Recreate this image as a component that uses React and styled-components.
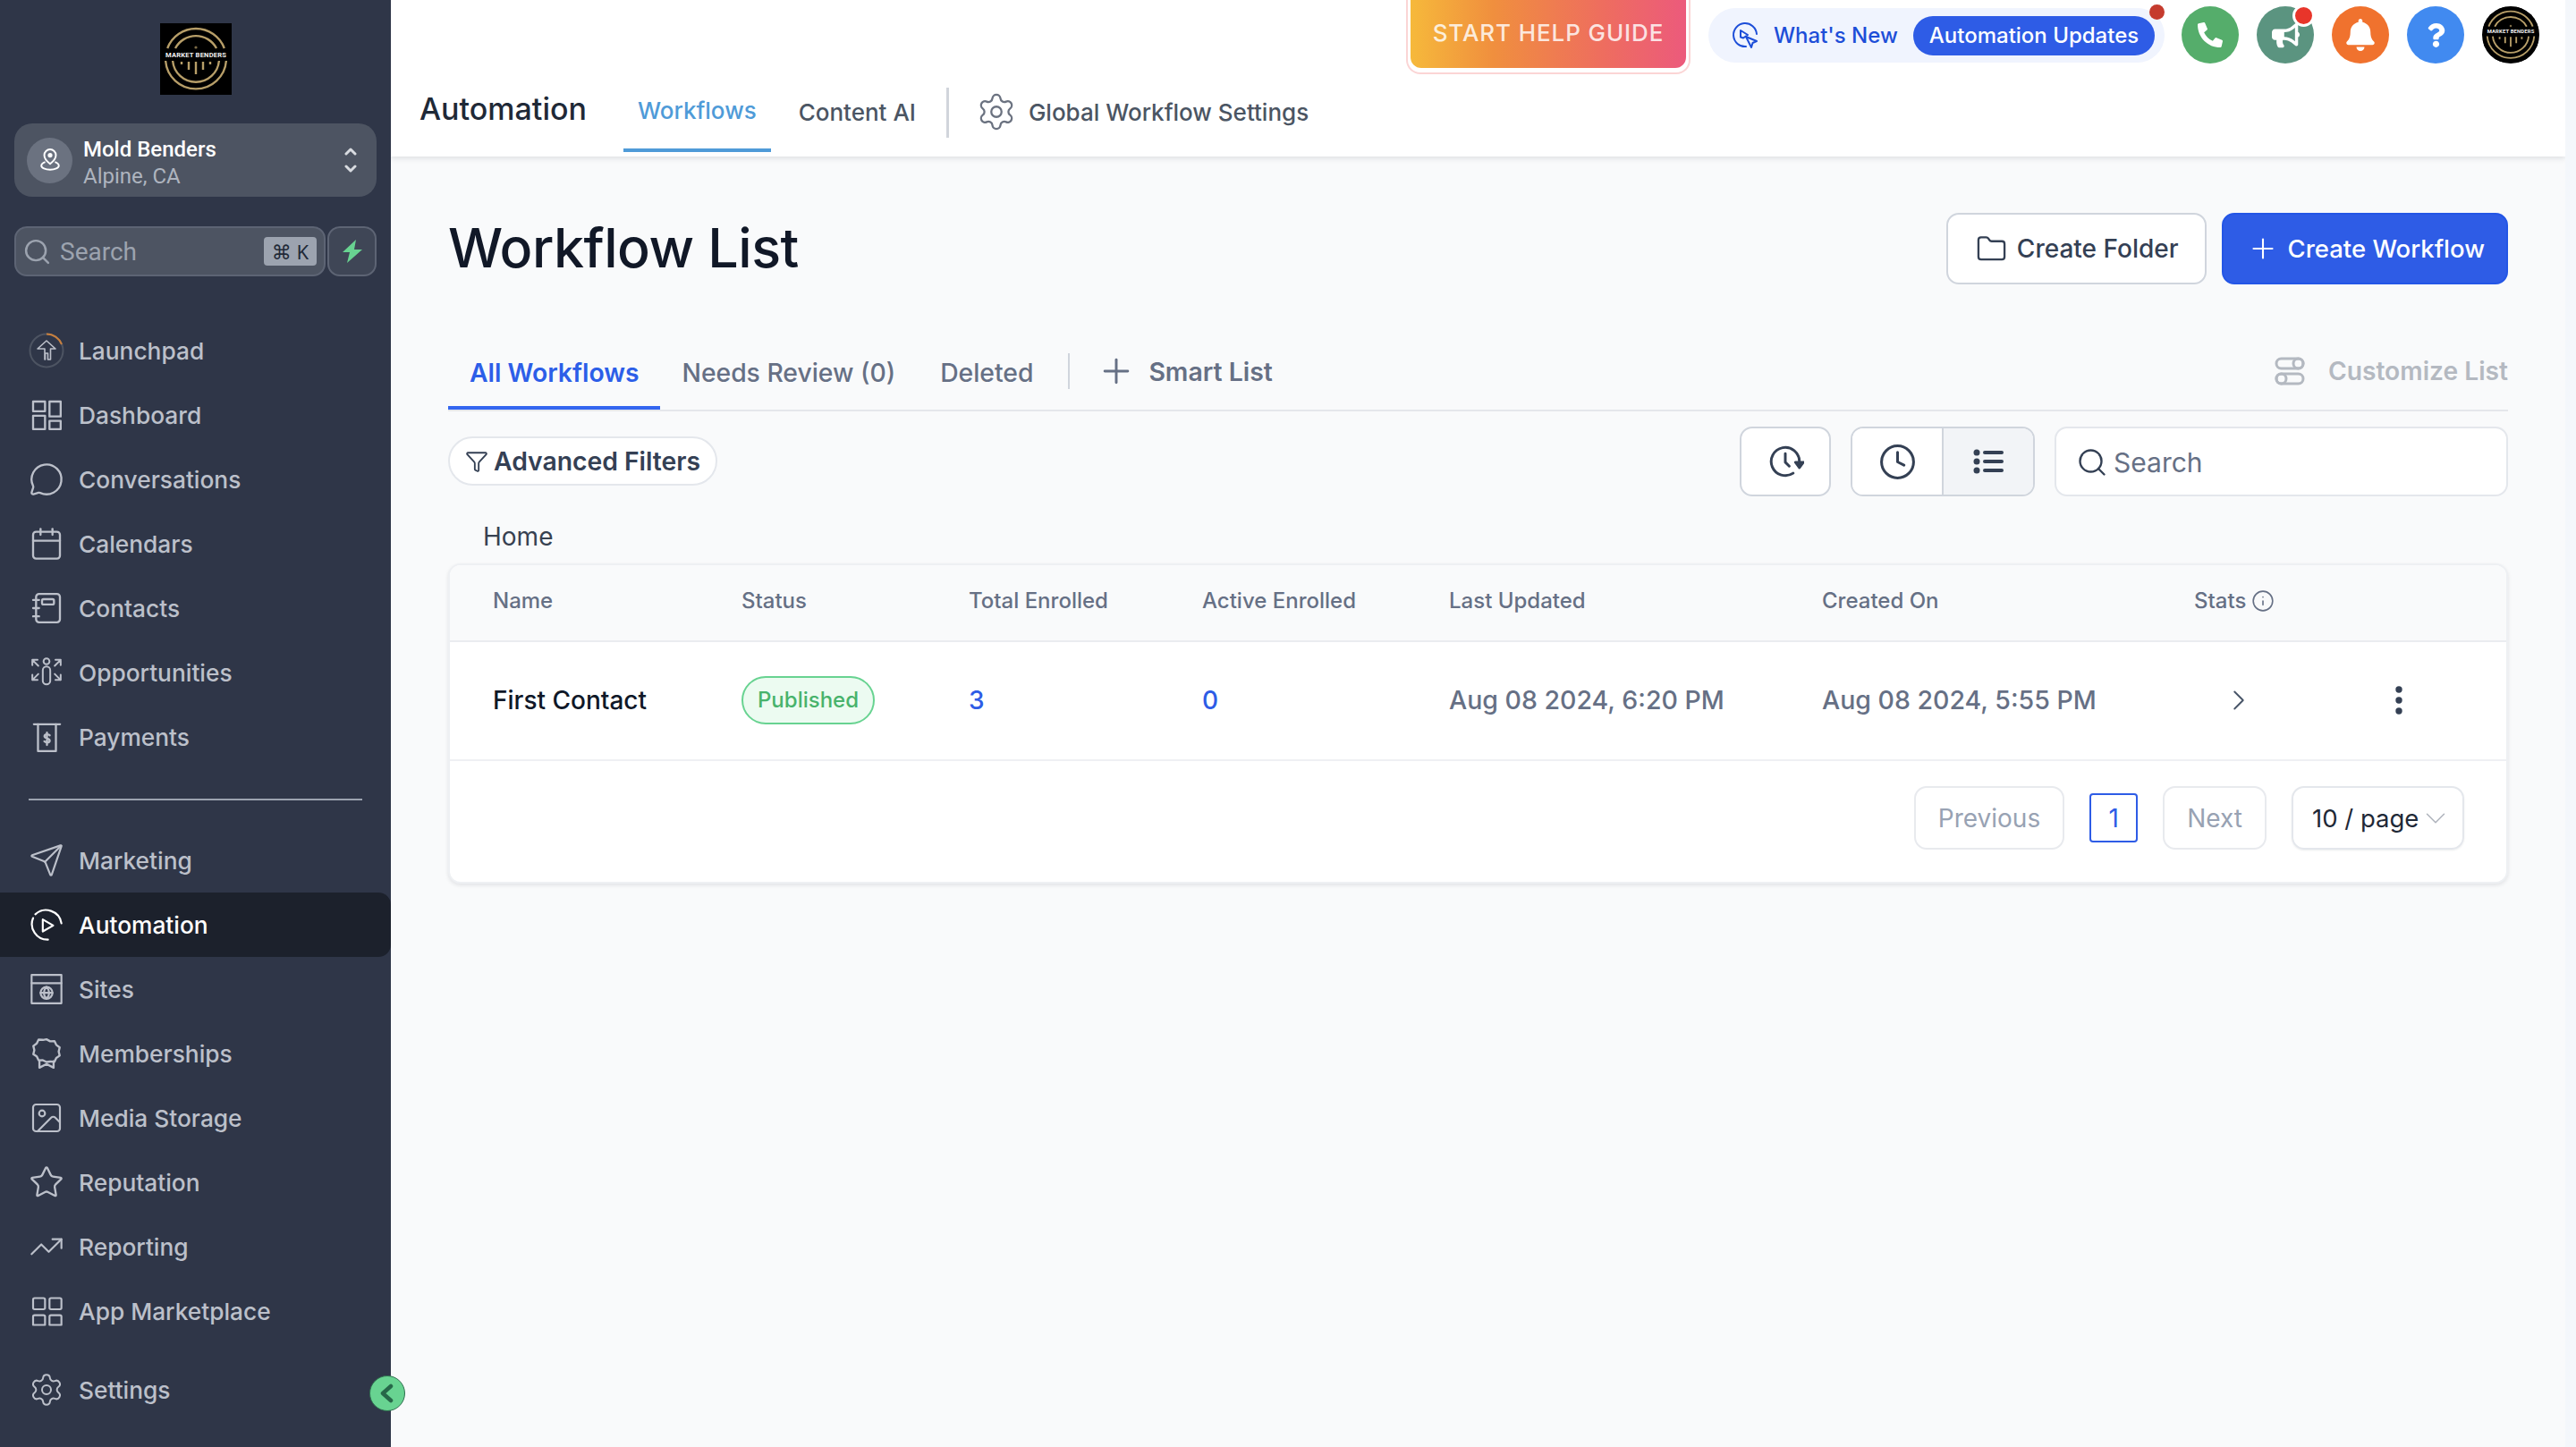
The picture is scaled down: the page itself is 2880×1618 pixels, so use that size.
import styled, { createGlobalStyle } from "styled-components";
import {
  Calendar,
  ChevronDown,
  ChevronRight,
  Clock,
  Filter,
  Folder,
  Image,
  Info,
  MessageCircle,
  Plus,
  Search,
  Send,
  Settings,
  Star,
  TrendingUp,
} from "lucide-react";
import { FaBell, FaBullhorn, FaPhoneAlt, FaQuestion } from "react-icons/fa";

const GlobalStyle = createGlobalStyle`
  * { box-sizing: border-box; }
  html, body { margin: 0; padding: 0; background: #f9fafb; }
  body { font-family: Inter, "Liberation Sans", sans-serif; }
`;

const Page = styled.div`
  display: flex;
  width: 2880px;
  height: 1618px;
  overflow: hidden;
  position: relative;
`;

/* ---------- sidebar ---------- */
const Sidebar = styled.aside`
  width: 437px;
  flex: none;
  background: #2f3648;
  display: flex;
  flex-direction: column;
  position: relative;
`;
const LogoWrap = styled.div`
  display: flex;
  justify-content: center;
  padding-top: 26px;
  height: 138px;
`;
const LocationCard = styled.div`
  margin: 0 16px;
  height: 82px;
  border-radius: 20px;
  background: #4d5462;
  display: flex;
  align-items: center;
  padding: 0 22px 0 14px;
  font-family: Roboto, sans-serif;
`;
const PinCircle = styled.div`
  width: 51px;
  height: 51px;
  border-radius: 50%;
  background: #6b7280;
  display: flex;
  align-items: center;
  justify-content: center;
  flex: none;
`;
const LocationText = styled.div`
  flex: 1;
  margin-left: 12px;
  padding-top: 5px;
  line-height: 30px;
`;
const LocationName = styled.div`
  font-size: 24px;
  font-weight: 500;
  color: #fff;
`;
const LocationCity = styled.div`
  font-size: 24px;
  color: #aeb4bf;
`;
const SearchRow = styled.div`
  display: flex;
  gap: 2px;
  margin: 33px 16px 0;
  height: 56px;
`;
const SideSearch = styled.div`
  flex: 1;
  border: 2px solid #5d6474;
  border-radius: 14px;
  background: #4d5462;
  display: flex;
  align-items: center;
  padding: 0 8px 0 7px;
  color: #9ca3af;
  font-family: Roboto, sans-serif;
  font-size: 28px;
`;
const SideSearchLabel = styled.span`
  flex: 1;
  margin-left: 9px;
`;
const Kbd = styled.span`
  width: 59px;
  height: 32px;
  background: #9ca3af;
  border-radius: 4px;
  color: #1f2937;
  font-size: 22px;
  display: flex;
  align-items: center;
  justify-content: center;
  font-family: "Noto Sans", "DejaVu Sans", sans-serif;
`;
const BoltButton = styled.div`
  width: 55px;
  border: 2px solid #5d6474;
  border-radius: 14px;
  background: #3f4656;
  display: flex;
  align-items: center;
  justify-content: center;
`;
const NavList = styled.nav`
  display: flex;
  flex-direction: column;
  margin-top: ${(p) => p.$top || 0}px;
`;
const NavItem = styled.div`
  height: 72px;
  display: flex;
  align-items: center;
  padding-left: 32px;
  color: ${(p) => (p.$active ? "#ffffff" : "#bcc0ca")};
  background: ${(p) => (p.$active ? "#1c212c" : "transparent")};
  border-radius: ${(p) => (p.$active ? "0 14px 14px 0" : "0")};
  font-size: 26.3px;
  font-weight: 500;
`;
const NavIconBox = styled.span`
  width: 40px;
  height: 40px;
  display: flex;
  align-items: center;
  justify-content: center;
  margin-right: 16px;
  flex: none;
`;
const NavDivider = styled.div`
  margin: 33px 32px 31px;
  height: 2px;
  background: #9ca3af;
`;
const SettingsNav = styled(NavItem)`
  margin-top: 16px;
`;
const CollapseButton = styled.div`
  position: absolute;
  left: 413px;
  top: 1538px;
  width: 40px;
  height: 40px;
  border-radius: 50%;
  background: #68d391;
  border: 1px solid #2f6f4f;
  display: flex;
  align-items: center;
  justify-content: center;
  z-index: 3;
`;

/* ---------- main ---------- */
const Main = styled.main`
  flex: 1;
  min-width: 0;
  display: flex;
  flex-direction: column;
`;
const Topbar = styled.header`
  height: 175px;
  background: #fff;
  box-shadow: 0 2px 6px rgba(16, 24, 40, 0.12);
  display: flex;
  flex-direction: column;
`;
const TopActions = styled.div`
  height: 83px;
  display: flex;
  justify-content: flex-end;
  align-items: flex-start;
  padding-right: 29px;
`;
const HelpOuter = styled.div`
  width: 318px;
  height: 83px;
  padding: 0 3px 3px;
  margin-right: 20px;
  border: 2px solid #fbd5d5;
  border-top: none;
  border-radius: 0 0 16px 16px;
`;
const HelpGuide = styled.div`
  height: 76px;
  border-radius: 0 0 12px 12px;
  background: linear-gradient(90deg, #f6b93b, #f08f3e 30%, #ee6d5f 70%, #ec5a7c);
  color: rgba(255, 255, 255, 0.82);
  font-size: 26px;
  font-weight: 500;
  letter-spacing: 0.9px;
  display: flex;
  align-items: center;
  justify-content: center;
  padding-bottom: 4px;
`;
const NewsPill = styled.div`
  width: 510px;
  height: 61px;
  margin: 9px 19px 0 0;
  border-radius: 31px;
  background: #f0f4fe;
  display: flex;
  align-items: center;
  padding: 0 11px 0 25px;
  position: relative;
  font-size: 24px;
  font-weight: 500;
  color: #1d4ed8;
`;
const NewsLabel = styled.span`
  flex: 1;
  margin-left: 16px;
`;
const NewsBadge = styled.span`
  width: 270px;
  height: 44px;
  border-radius: 22px;
  background: #2e5ce6;
  color: #fff;
  display: flex;
  align-items: center;
  justify-content: center;
`;
const Dot = styled.span`
  position: absolute;
  border-radius: 50%;
  background: ${(p) => p.$color};
`;
const NewsDot = styled(Dot)`
  right: 0;
  top: -4px;
  width: 17px;
  height: 17px;
`;
const RoundButtons = styled.div`
  display: flex;
  gap: 20px;
  margin-top: 7px;
`;
const RoundButton = styled.div`
  width: 64px;
  height: 64px;
  border-radius: 50%;
  background: ${(p) => p.$color};
  color: #fff;
  display: flex;
  align-items: center;
  justify-content: center;
  position: relative;
  overflow: ${(p) => (p.$clip ? "hidden" : "visible")};
`;
const AlertDot = styled(Dot)`
  right: -1px;
  top: -2px;
  width: 25px;
  height: 25px;
  border: 3px solid #fff;
`;
const SubNav = styled.div`
  flex: 1;
  display: flex;
  padding-left: 32px;
`;
const SubTitle = styled.div`
  font-size: 34px;
  font-weight: 500;
  color: #1f2937;
  line-height: 44px;
  padding-top: 17px;
  margin-right: 41px;
`;
const SubTab = styled.div`
  height: 87px;
  padding: ${(p) => (p.$active ? "24px" : "26px")} 16px 0;
  font-size: 26px;
  font-weight: 500;
  line-height: 34px;
  color: ${(p) => (p.$active ? "#4f9bd8" : "#4b5563")};
  border-bottom: 4px solid ${(p) => (p.$active ? "#4f9bd8" : "transparent")};
  margin-right: ${(p) => (p.$active ? "15px" : "0")};
`;
const SubDivider = styled.div`
  width: 3px;
  height: 56px;
  margin: 15px 34px 0 18px;
  background: #d1d5db;
`;
const SubLink = styled.div`
  display: flex;
  align-items: center;
  height: 54px;
  margin-top: 15px;
  gap: 17px;
  font-size: 26px;
  font-weight: 500;
  color: #4b5563;
`;
const GearSlot = styled.span`
  display: flex;
  margin: 0 -4px;
`;

const Content = styled.div`
  padding: 63px 64px 0;
`;
const HeadingRow = styled.div`
  display: flex;
  align-items: center;
  justify-content: space-between;
  height: 80px;
`;
const Heading = styled.h1`
  margin: 0 0 3px;
  font-size: 61px;
  font-weight: 500;
  color: #111827;
  letter-spacing: -0.5px;
`;
const HeadingActions = styled.div`
  display: flex;
  gap: 17px;
`;
const ActionButton = styled.button`
  height: 80px;
  padding: 0 ${(p) => (p.$primary ? "24px" : "29px")} 0 ${(p) => (p.$primary ? "26px" : "31px")};
  display: flex;
  align-items: center;
  gap: ${(p) => (p.$primary ? "10px" : "11px")};
  border-radius: 14px;
  border: 2px solid ${(p) => (p.$primary ? "#2456e6" : "#d0d5dd")};
  background: ${(p) => (p.$primary ? "#2e5ce6" : "#fff")};
  color: ${(p) => (p.$primary ? "#fff" : "#344054")};
  font-family: Inter, sans-serif;
  font-size: ${(p) => (p.$primary ? "27.5px" : "28px")};
  font-weight: 500;
`;
const TabsRow = styled.div`
  margin-top: 60px;
  height: 82px;
  border-bottom: 2px solid #e5e7eb;
  display: flex;
  align-items: flex-start;
`;
const ListTab = styled.div`
  height: 80px;
  padding: 2px 24px 0;
  display: flex;
  align-items: center;
  font-size: 28.3px;
  font-weight: ${(p) => (p.$active ? 600 : 500)};
  color: ${(p) => (p.$active ? "#2c5ee8" : "#667085")};
  border-bottom: 4px solid ${(p) => (p.$active ? "#3366f0" : "transparent")};
  margin-right: ${(p) => (p.$active ? "0" : "2px")};
`;
const TabDivider = styled.div`
  width: 2px;
  height: 40px;
  margin: 17px 30px 0 13px;
  background: #d0d5dd;
`;
const SmartList = styled.div`
  display: flex;
  align-items: center;
  gap: 14px;
  height: 74px;
  font-size: 28.4px;
  font-weight: 600;
  color: #667085;
`;
const CustomizeList = styled.div`
  margin-left: auto;
  display: flex;
  align-items: center;
  gap: 26px;
  height: 74px;
  font-size: 28.2px;
  font-weight: 600;
  color: #b4b9c1;
`;
const Toolbar = styled.div`
  margin-top: 17px;
  height: 78px;
  display: flex;
  align-items: flex-start;
`;
const FilterPill = styled.div`
  margin-top: 11px;
  height: 55px;
  padding: 0 17px 0 17px;
  display: flex;
  align-items: center;
  gap: 6px;
  border: 2px solid #e4e7ec;
  border-radius: 28px;
  background: #fff;
  font-size: 28.3px;
  font-weight: 600;
  color: #344054;
`;
const ToolbarRight = styled.div`
  margin-left: auto;
  display: flex;
  gap: 22px;
`;
const IconButton = styled.div`
  width: 102px;
  height: 78px;
  border: 2px solid #d0d5dd;
  border-radius: 14px;
  background: #fff;
  color: #344054;
  display: flex;
  align-items: center;
  justify-content: center;
`;
const Segmented = styled.div`
  display: flex;
  width: 206px;
  height: 78px;
  border: 2px solid #d0d5dd;
  border-radius: 14px;
  overflow: hidden;
  background: #fff;
`;
const Segment = styled.div`
  flex: 1;
  display: flex;
  align-items: center;
  justify-content: center;
  color: #344054;
  background: ${(p) => (p.$active ? "#f2f4f7" : "#fff")};
  border-left: ${(p) => (p.$active ? "2px solid #d0d5dd" : "none")};
`;
const SearchBox = styled.div`
  width: 507px;
  height: 78px;
  border: 2px solid #e4e7ec;
  border-radius: 14px;
  background: #fff;
  display: flex;
  align-items: center;
  gap: 6px;
  padding: 2px 0 0 22px;
  color: #667085;
  font-size: 30px;
`;
const Breadcrumb = styled.div`
  padding: 28px 0 13px 39px;
  line-height: 34px;
  font-size: 28px;
  color: #374151;
`;
const Card = styled.section`
  height: 358px;
  border: 2px solid #eef0f3;
  border-radius: 14px;
  background: #fff;
  box-shadow: 0 2px 4px rgba(16, 24, 40, 0.1);
  overflow: hidden;
`;
const columns = "278px 254px 261px 276px 417px 416px 225px 1fr";
const HeadRow = styled.div`
  display: grid;
  grid-template-columns: ${columns};
  align-items: center;
  height: 86px;
  padding: 0 0 5px 48px;
  background: #f9fafb;
  border-bottom: 2px solid #eaecf0;
  font-size: 24px;
  font-weight: 500;
  color: #667085;
`;
const HeadWithIcon = styled.span`
  display: flex;
  align-items: center;
  gap: 6px;
`;
const BodyRow = styled.div`
  display: grid;
  grid-template-columns: ${columns};
  align-items: center;
  height: 133px;
  padding: 0 0 2px 48px;
  border-bottom: 2px solid #eff0f3;
  font-size: 28px;
  font-weight: 500;
  color: #667085;
`;
const WorkflowName = styled.span`
  color: #101828;
`;
const DateCell = styled.span`
  font-size: 28.5px;
`;
const Published = styled.span`
  width: 149px;
  height: 54px;
  border-radius: 27px;
  border: 2px solid #68d391;
  background: #ecfbf1;
  color: #48b36c;
  font-size: 24px;
  display: flex;
  align-items: center;
  justify-content: center;
`;
const CountLink = styled.span`
  color: #2e5ce6;
`;
const StatsArrow = styled.span`
  display: flex;
  margin-left: 31px;
  color: #475467;
`;
const Kebab = styled.svg`
  display: block;
  fill: #344054;
`;
const Pagination = styled.div`
  display: flex;
  align-items: flex-start;
  justify-content: flex-end;
  padding: 28px 47px 0 0;
  gap: 28px;
`;
const PageButton = styled.div`
  height: 71px;
  padding: 0 25px;
  display: flex;
  align-items: center;
  border: 2px solid #e8eaee;
  border-radius: 14px;
  font-size: 28px;
  color: #98a2b3;
`;
const PageNumber = styled.div`
  width: 54px;
  height: 55px;
  margin-top: 8px;
  display: flex;
  align-items: center;
  justify-content: center;
  border: 2px solid #2e5ce6;
  border-radius: 4px;
  font-size: 28px;
  color: #2e5ce6;
`;
const PageSize = styled.div`
  width: 193px;
  height: 71px;
  padding-left: 21px;
  display: flex;
  align-items: center;
  border: 2px solid #e4e7ec;
  border-radius: 14px;
  font-size: 27.5px;
  color: #1f2937;
  box-shadow: 0 1px 2px rgba(16, 24, 40, 0.08);
`;
const RightStrip = styled.div`
  width: 12px;
  flex: none;
  background: #f4f7fb;
`;

/* ---------- drawn icons ---------- */
const Logo = ({ size }) => (
  <svg width={size} height={size} viewBox="0 0 80 80">
    <rect width="80" height="80" fill="#000" />
    <g fill="none" stroke="#b79e68" strokeWidth="2.4">
      <path d="M8.2 28A34 34 0 0 1 71.8 28" />
      <path d="M6.1 42A34 34 0 0 0 73.9 42" />
      <path d="M17 28A26 26 0 0 1 63 28" />
      <path d="M14.1 42A26 26 0 0 0 65.9 42" />
      <path d="M24 43v3M32 43v9M40 43v14M48 43v9M56 43v3" />
    </g>
    <circle cx="40" cy="27" r="1.6" fill="#7d6c47" />
    <text x="40" y="37.5" textAnchor="middle" fontFamily="Roboto, sans-serif" fontWeight="700" fontSize="7.6" fill="#f2f2f2" textLength="68">
      MARKET BENDERS
    </text>
  </svg>
);

const Stroke = ({ size = 40, width = 1.4, children }) => (
  <svg width={size} height={size} viewBox="0 0 24 24" fill="none" stroke="currentColor" strokeWidth={width} strokeLinecap="round" strokeLinejoin="round">
    {children}
  </svg>
);

const LaunchpadIcon = () => (
  <svg width="40" height="40" viewBox="0 0 40 40" fill="none">
    <circle cx="20" cy="20" r="18.5" stroke="#4d5462" strokeWidth="2" />
    <path d="M20 1.5A18.5 18.5 0 0 1 37 13" stroke="#c77f3e" strokeWidth="2" />
    <path d="M20 9l10 9h-5.5v12h-3v-7h-3v7h-.5V18H10z" stroke="#bcc0ca" strokeWidth="1.6" strokeLinejoin="round" />
  </svg>
);
const DashboardIcon = () => (
  <Stroke>
    <rect x="3" y="3" width="8" height="6.5" />
    <rect x="14" y="3" width="7.5" height="10" />
    <rect x="3" y="12.5" width="8" height="9" />
    <rect x="14" y="16" width="7.5" height="5.5" />
  </Stroke>
);
const ContactsIcon = () => (
  <Stroke>
    <rect x="5" y="2.5" width="16" height="19" rx="2" />
    <rect x="9" y="6" width="8" height="3.5" rx="1" />
    <path d="M3 6.5h4M3 12h4M3 17.5h4" />
  </Stroke>
);
const OpportunitiesIcon = () => (
  <Stroke size={46} width={1.2}>
    <circle cx="12" cy="4.5" r="2" />
    <path d="M9.5 10.5a2.5 2.5 0 0 1 5 0v7a2.5 2.5 0 0 1-5 0z" />
    <path d="M2.5 7V3.5H6M2.5 3.5l4 4M21.5 7V3.5H18M21.5 3.5l-4 4M2.5 13.5V17H6M2.5 17l4-4M21.5 13.5V17H18M21.5 17l-4-4" />
  </Stroke>
);
const PaymentsIcon = () => (
  <Stroke size={37} width={1.5}>
    <path d="M2.5 2.5h19" />
    <path d="M5.5 2.5V22h13V2.5" />
    <path d="M14 10.5c-.5-.8-3.8-1.2-3.8.7 0 2 3.8 1 3.8 3.2 0 1.8-3.3 1.4-3.9.5M12 8.5v9" />
  </Stroke>
);
const AutomationIcon = () => (
  <Stroke size={42} width={1.3}>
    <path d="M22 11A10.5 10.5 0 0 0 4.5 5M3 7.5A10.5 10.5 0 0 0 13 22" />
    <path d="M9.5 8.5l7 4-7 4z" />
  </Stroke>
);
const SitesIcon = () => (
  <Stroke size={42} width={1.3}>
    <rect x="2" y="2.5" width="20" height="19" />
    <path d="M2 8h20" />
    <circle cx="12" cy="14.5" r="4" />
    <path d="M8 14.5h8M12 10.5c-2.4 2.4-2.4 5.6 0 8M12 10.5c2.4 2.4 2.4 5.6 0 8" />
  </Stroke>
);
const MembershipsIcon = () => (
  <Stroke size={38} width={1.5}>
    <path d="M12 2l2.6 1.4 3-.2 1.3 2.7 2.4 1.8-.7 2.9.7 2.9-2.4 1.6-1.3 2.7-3-.1L12 18l-2.6-1.3-3 .1-1.3-2.7-2.4-1.6.7-2.9-.7-2.9 2.4-1.8 1.3-2.7 3 .2z" />
    <path d="M7 17.5V22l5-2.6 5 2.6v-4.5" />
  </Stroke>
);
const CardsIcon = () => (
  <Stroke size={43} width={1.3}>
    <rect x="3" y="3" width="8" height="7.5" rx="1" />
    <rect x="14" y="3" width="8" height="7.5" rx="1" />
    <path d="M3 21v-5.5a1 1 0 0 1 1-1h6a1 1 0 0 1 1 1V21M14 21v-5.5a1 1 0 0 1 1-1h6a1 1 0 0 1 1 1V21M3 21h8M14 21h8" />
  </Stroke>
);
const PinIcon = () => (
  <svg width="26" height="26" viewBox="0 0 24 24" fill="none" stroke="#fff" strokeWidth="1.8" strokeLinejoin="round">
    <path d="M12 16s-6-4.6-6-9a6 6 0 0 1 12 0c0 4.4-6 9-6 9z" />
    <circle cx="12" cy="7" r="1.5" fill="#fff" />
    <path d="M7 14c-2.5 1-4 2.2-4 3.8C3 20 7 22 12 22s9-2 9-4.2c0-1.6-1.5-2.8-4-3.8" />
  </svg>
);
const UpDownIcon = () => (
  <svg width="14" height="28" viewBox="0 0 14 28" fill="none" stroke="#d8dbe0" strokeWidth="3" strokeLinecap="round" strokeLinejoin="round">
    <path d="M2 7l5-5 5 5M2 21l5 5 5-5" />
  </svg>
);
const BoltIcon = () => (
  <svg width="24" height="26" viewBox="0 0 24 26">
    <path d="M16 0L1 14h8l-3 12 17-15h-9z" fill="#68d391" />
  </svg>
);
const WhatsNewIcon = () => (
  <svg width="32" height="32" viewBox="0 0 32 32" fill="none" stroke="#1d4ed8" strokeWidth="2" strokeLinejoin="round" strokeLinecap="round">
    <path d="M17 28A13 13 0 1 1 29 14" />
    <path d="M11 10l8 5-5 3.5-3-1z" />
    <path d="M17 17l12 5-4.5 2-1.500 5z" fill="#f0f4fe" />
  </svg>
);
const RefreshClockIcon = () => (
  <Stroke size={42} width={1.7}>
    <path d="M21 12a9 9 0 1 0-4 7.5" />
    <path d="M12 7v5.5l2.5 2.5" />
    <path d="M18.5 12.5h5L21 16z" fill="currentColor" />
  </Stroke>
);
const BulletsIcon = () => (
  <svg width="34" height="28" viewBox="0 0 34 28" fill="currentColor">
    <circle cx="4" cy="4" r="3.5" />
    <circle cx="4" cy="14" r="3.5" />
    <circle cx="4" cy="24" r="3.5" />
    <rect x="11" y="2" width="23" height="4" rx="2" />
    <rect x="11" y="12" width="23" height="4" rx="2" />
    <rect x="11" y="22" width="23" height="4" rx="2" />
  </svg>
);
const CustomizeIcon = () => (
  <svg width="34" height="34" viewBox="0 0 34 34" fill="none" stroke="#b4b9c1" strokeWidth="3">
    <rect x="2" y="3" width="30" height="11" rx="5.5" />
    <circle cx="26.5" cy="8.5" r="5.5" />
    <rect x="2" y="20" width="30" height="11" rx="5.5" />
    <circle cx="7.5" cy="25.5" r="5.5" />
  </svg>
);

const mainNav = [
  ["Launchpad", <LaunchpadIcon />],
  ["Dashboard", <DashboardIcon />],
  ["Conversations", <MessageCircle size={40} strokeWidth={1.4} />],
  ["Calendars", <Calendar size={40} strokeWidth={1.4} />],
  ["Contacts", <ContactsIcon />],
  ["Opportunities", <OpportunitiesIcon />],
  ["Payments", <PaymentsIcon />],
];
const lowerNav = [
  ["Marketing", <Send size={42} strokeWidth={1.3} />],
  ["Automation", <AutomationIcon />, true],
  ["Sites", <SitesIcon />],
  ["Memberships", <MembershipsIcon />],
  ["Media Storage", <Image size={44} strokeWidth={1.3} />],
  ["Reputation", <Star size={40} strokeWidth={1.4} />],
  ["Reporting", <TrendingUp size={44} strokeWidth={1.3} />],
  ["App Marketplace", <CardsIcon />],
];

const renderNav = (items) =>
  items.map(([label, icon, active]) => (
    <NavItem key={label} $active={active}>
      <NavIconBox>{icon}</NavIconBox>
      {label}
    </NavItem>
  ));

const App = () => {
  return (
    <Page>
      <GlobalStyle />
      <Sidebar>
        <LogoWrap>
          <Logo size={80} />
        </LogoWrap>
        <LocationCard>
          <PinCircle>
            <PinIcon />
          </PinCircle>
          <LocationText>
            <LocationName>Mold Benders</LocationName>
            <LocationCity>Alpine, CA</LocationCity>
          </LocationText>
          <UpDownIcon />
        </LocationCard>
        <SearchRow>
          <SideSearch>
            <Search size={33} color="#9ca3af" strokeWidth={1.8} />
            <SideSearchLabel>Search</SideSearchLabel>
            <Kbd>⌘ K</Kbd>
          </SideSearch>
          <BoltButton>
            <BoltIcon />
          </BoltButton>
        </SearchRow>
        <NavList $top={47}>{renderNav(mainNav)}</NavList>
        <NavDivider />
        <NavList>{renderNav(lowerNav)}</NavList>
        <SettingsNav>
          <NavIconBox>
            <Settings size={46} strokeWidth={1.2} />
          </NavIconBox>
          Settings
        </SettingsNav>
        <CollapseButton>
          <svg width="22" height="22" viewBox="0 0 22 22" fill="none" stroke="#276749" strokeWidth="4.5" strokeLinecap="round" strokeLinejoin="round">
            <path d="M15 3L6 11l9 8" />
          </svg>
        </CollapseButton>
      </Sidebar>

      <Main>
        <Topbar>
          <TopActions>
            <HelpOuter>
              <HelpGuide>START HELP GUIDE</HelpGuide>
            </HelpOuter>
            <NewsPill>
              <WhatsNewIcon />
              <NewsLabel>What's New</NewsLabel>
              <NewsBadge>Automation Updates</NewsBadge>
              <NewsDot $color="#c53b2e" />
            </NewsPill>
            <RoundButtons>
              <RoundButton $color="#55ad6b">
                <FaPhoneAlt size={28} />
              </RoundButton>
              <RoundButton $color="#5b9480">
                <FaBullhorn size={31} />
                <AlertDot $color="#e8352a" />
              </RoundButton>
              <RoundButton $color="#f0722e">
                <FaBell size={36} />
              </RoundButton>
              <RoundButton $color="#418af0">
                <FaQuestion size={27} />
              </RoundButton>
              <RoundButton $color="#000" $clip>
                <Logo size={62} />
              </RoundButton>
            </RoundButtons>
          </TopActions>
          <SubNav>
            <SubTitle>Automation</SubTitle>
            <SubTab $active>Workflows</SubTab>
            <SubTab>Content AI</SubTab>
            <SubDivider />
            <SubLink>
              <GearSlot>
                <Settings size={46} color="#6b7280" strokeWidth={1.2} />
              </GearSlot>
              Global Workflow Settings
            </SubLink>
          </SubNav>
        </Topbar>

        <Content>
          <HeadingRow>
            <Heading>Workflow List</Heading>
            <HeadingActions>
              <ActionButton>
                <Folder size={35} strokeWidth={1.6} />
                Create Folder
              </ActionButton>
              <ActionButton $primary>
                <Plus size={36} strokeWidth={1.4} />
                Create Workflow
              </ActionButton>
            </HeadingActions>
          </HeadingRow>

          <TabsRow>
            <ListTab $active>All Workflows</ListTab>
            <ListTab>Needs Review (0)</ListTab>
            <ListTab>Deleted</ListTab>
            <TabDivider />
            <SmartList>
              <Plus size={44} strokeWidth={1.6} />
              Smart List
            </SmartList>
            <CustomizeList>
              <CustomizeIcon />
              Customize List
            </CustomizeList>
          </TabsRow>

          <Toolbar>
            <FilterPill>
              <Filter size={26} strokeWidth={1.7} />
              Advanced Filters
            </FilterPill>
            <ToolbarRight>
              <IconButton>
                <RefreshClockIcon />
              </IconButton>
              <Segmented>
                <Segment>
                  <Clock size={43} strokeWidth={1.7} />
                </Segment>
                <Segment $active>
                  <BulletsIcon />
                </Segment>
              </Segmented>
              <SearchBox>
                <Search size={36} color="#344054" strokeWidth={1.6} />
                Search
              </SearchBox>
            </ToolbarRight>
          </Toolbar>

          <Breadcrumb>Home</Breadcrumb>

          <Card>
            <HeadRow>
              <span>Name</span>
              <span>Status</span>
              <span>Total Enrolled</span>
              <span>Active Enrolled</span>
              <span>Last Updated</span>
              <span>Created On</span>
              <HeadWithIcon>
                Stats
                <Info size={26} strokeWidth={1.5} />
              </HeadWithIcon>
            </HeadRow>
            <BodyRow>
              <WorkflowName>First Contact</WorkflowName>
              <span>
                <Published>Published</Published>
              </span>
              <CountLink>3</CountLink>
              <CountLink>0</CountLink>
              <DateCell>Aug 08 2024, 6:20 PM</DateCell>
              <DateCell>Aug 08 2024, 5:55 PM</DateCell>
              <StatsArrow>
                <ChevronRight size={38} strokeWidth={1.2} />
              </StatsArrow>
              <Kebab width="8" height="32" viewBox="0 0 8 32">
                <circle cx="4" cy="4" r="3.7" />
                <circle cx="4" cy="16" r="3.7" />
                <circle cx="4" cy="28" r="3.7" />
              </Kebab>
            </BodyRow>
            <Pagination>
              <PageButton>Previous</PageButton>
              <PageNumber>1</PageNumber>
              <PageButton>Next</PageButton>
              <PageSize>
                10 / page
                <ChevronDown size={38} color="#b0b5bd" strokeWidth={1} />
              </PageSize>
            </Pagination>
          </Card>
        </Content>
      </Main>
      <RightStrip />
    </Page>
  );
};

export default App;
